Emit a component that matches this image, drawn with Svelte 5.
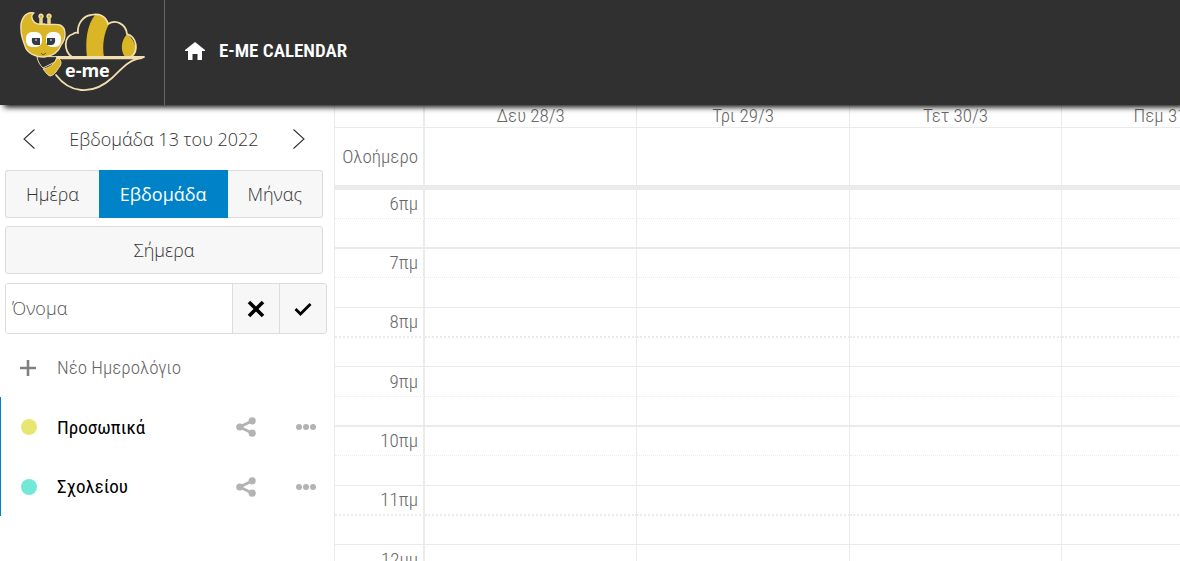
<script>
  let view = $state('week')
  let name = $state('')

  const views = [
    { id: 'day', label: 'Ημέρα' },
    { id: 'week', label: 'Εβδομάδα' },
    { id: 'month', label: 'Μήνας' },
  ]

  const calendars = [
    { name: 'Προσωπικά', color: '#e7e671' },
    { name: 'Σχολείου', color: '#74e8d6' },
  ]

  const days = ['Δευ 28/3', 'Τρι 29/3', 'Τετ 30/3', 'Πεμ 31/3', 'Παρ 1/4', 'Σαβ 2/4', 'Κυρ 3/4']

  // two half-hour slots for each hour
  const slots = ['6πμ', '7πμ', '8πμ', '9πμ', '10πμ', '11πμ', '12μμ'].flatMap((h) => [h, ''])
</script>

<div class="page">
  <header class="topbar">
    <a class="logo" href="#home" aria-label="e-me">
      <svg viewBox="0 0 164 105">
        <g stroke="#f1dfae" stroke-width="1.8" stroke-linejoin="round" stroke-linecap="round">
          <path d="M95 15C87 25 85 41 87 57H104C102 45 104 33 109 24C105 17 101 14 95 15Z" fill="#dab526" stroke="none" />
          <path d="M127 34C121 41 120 50 125 57H131C138 52 137 42 127 34Z" fill="#dab526" stroke="none" />
          <path d="M72 57C64 51 63 37 73 34Q76 32 78 33C77 24 83 16 91 15C99 13 106 16 108 24C116 19 126 24 127 34C137 37 139 51 131 57" fill="none" />
          <path d="M57 57L144 57C127 60 122 69 112 78C101 88 91 91 81 90C70 89 62 83 56 75" fill="none" />
          <path d="M56 58H141" stroke-width="2.6" />
          <path d="M37 57C38 62 40 65 43 68L55 62L57 57Z" fill="#303030" stroke-width="1" />
          <path d="M57 58C61 59 62 63 60 66C57 70 55 75 50 76C47 75 45 71 43 69C49 68 55 64 57 58Z" fill="#dab526" stroke-width="1" />
          <path d="M40 25V18A2 2 0 1 1 42 18V25M48 25V18A2 2 0 1 1 50 18V25" fill="#dab526" stroke-width="1.4" />
          <path d="M34 13C25 11 20 20 21 30C21 36 23 40 25 46C27 53 35 57 44 57C53 56 59 51 61 45C66 39 67 28 60 25C54 23 49 26 44 24C38 25 33 23 32 18Q31 15 34 13Z" fill="#dab526" stroke-width="1.4" />
        </g>
        <rect x="26" y="32" width="16" height="15" rx="6" fill="#fff" />
        <rect x="46" y="32" width="15" height="15" rx="6" fill="#fff" />
        <path d="M32 38H40V45H35Q31 44 32 38ZM47 38H55Q56 44 52 45H47Z" fill="#343b45" />
        <path d="M35 39H37V41H35ZM50 39H52V41H50Z" fill="#8b96a3" />
        <path d="M41 53L43 55L46 53" fill="none" stroke="#6c5610" />
        <text x="65" y="77">e-me</text>
      </svg>
    </a>
    <a class="title" href="#calendar">
      <svg width="20" height="18" viewBox="0 0 20 18">
        <path d="M10 0L20 8V9H17V18H12.5V12H7.5V18H3V9H0V8Z" fill="#fff" />
      </svg>
      <span>E-ME CALENDAR</span>
    </a>
  </header>

  <div class="content">
    <aside class="sidebar">
      <div class="period">
        <button aria-label="Προηγούμενη">
          <svg width="12" height="20" viewBox="0 0 12 20"><path d="M11.5 0.5L1 10L11.5 19.5" /></svg>
        </button>
        <span>Εβδομάδα 13 του 2022</span>
        <button aria-label="Επόμενη">
          <svg width="12" height="20" viewBox="0 0 12 20"><path d="M0.5 0.5L11 10L0.5 19.5" /></svg>
        </button>
      </div>

      <div class="views">
        {#each views as v}
          <button class:active={view === v.id} aria-pressed={view === v.id} onclick={() => (view = v.id)}>{v.label}</button>
        {/each}
      </div>

      <button class="today">Σήμερα</button>

      <form class="name-form" onsubmit={(e) => e.preventDefault()}>
        <input type="text" placeholder="Όνομα" aria-label="Όνομα" bind:value={name} />
        <button type="button" aria-label="Ακύρωση" onclick={() => (name = '')}>
          <svg width="18" height="18" viewBox="0 0 18 18"><path d="M2 2L16 16M16 2L2 16" stroke-width="3.6" /></svg>
        </button>
        <button type="submit" aria-label="Αποθήκευση">
          <svg width="18" height="18" viewBox="0 0 18 18"><path d="M1.5 9L6.5 14L16.5 4" stroke-width="2.8" /></svg>
        </button>
      </form>

      <button class="new-calendar">
        <svg width="16" height="16" viewBox="0 0 16 16"><path d="M8 0V16M0 8H16" stroke="#808080" stroke-width="2.6" /></svg>
        <span>Νέο Ημερολόγιο</span>
      </button>

      <ul class="calendars">
        {#each calendars as cal}
          <li>
            <span class="dot" style="background: {cal.color}"></span>
            <span class="cal-name">{cal.name}</span>
            <button aria-label="Κοινή χρήση">
              <svg width="20" height="20" viewBox="0 0 20 20">
                <path d="M16.5 3.8L3.6 10L16.5 16.2" fill="none" stroke="#b3b3b3" stroke-width="2.8" />
                <circle cx="16.2" cy="3.8" r="3.6" />
                <circle cx="3.8" cy="10" r="3.6" />
                <circle cx="16.2" cy="16.2" r="3.6" />
              </svg>
            </button>
            <button aria-label="Περισσότερα">
              <svg width="20" height="20" viewBox="0 0 20 20">
                <circle cx="3" cy="10" r="3" />
                <circle cx="10" cy="10" r="3" />
                <circle cx="17" cy="10" r="3" />
              </svg>
            </button>
          </li>
        {/each}
      </ul>
    </aside>

    <main class="calendar">
      <table>
        <thead>
          <tr class="days">
            <th class="axis"></th>
            {#each days as day}
              <th scope="col">{day}</th>
            {/each}
          </tr>
          <tr class="all-day">
            <th class="axis" scope="row">Ολοήμερο</th>
            {#each days as day}
              <td></td>
            {/each}
          </tr>
        </thead>
        <tbody>
          {#each slots as slot}
            <tr>
              <th class="axis" scope="row">{slot}</th>
              {#each days as day}
                <td></td>
              {/each}
            </tr>
          {/each}
        </tbody>
      </table>
    </main>
  </div>
</div>

<style>
  :global(body) {
    margin: 0;
    background: #fff;
  }

  .page {
    display: flex;
    flex-direction: column;
    height: 100vh;
    overflow: hidden;
    font-family: 'Open Sans', 'Noto Sans', sans-serif;
    font-size: 18px;
    font-weight: 300;
    color: #333;
  }

  button {
    padding: 0;
    border: 0;
    background: none;
    color: inherit;
    font: inherit;
    cursor: pointer;
  }

  svg {
    display: block;
    flex: none;
  }

  .topbar {
    position: relative;
    z-index: 1;
    display: flex;
    flex: none;
    height: 105px;
    background: #303030;
    box-shadow: 4px 2px 6px #000;
  }

  .logo {
    width: 164px;
    border-right: 1px solid #666;
  }

  .logo text {
    font-family: 'Open Sans', sans-serif;
    font-size: 18px;
    font-weight: 700;
    fill: #fff;
  }

  .title {
    display: flex;
    align-items: center;
    gap: 14px;
    padding: 0 20px 4px;
    color: #fff;
    font-family: 'Roboto Condensed', Roboto, sans-serif;
    font-size: 19px;
    font-weight: 600;
    text-decoration: none;
  }

  .content {
    display: flex;
    flex: 1;
    min-height: 0;
  }

  .sidebar {
    flex: none;
    box-sizing: border-box;
    width: 334px;
  }

  .period {
    display: flex;
    align-items: center;
    justify-content: space-between;
    height: 65px;
    padding: 2px 29px 0 23px;
    box-sizing: border-box;
  }

  .period path {
    fill: none;
    stroke: #333;
    stroke-width: 1.1;
  }

  .views {
    display: flex;
    height: 48px;
    margin: 0 11px 8px 5px;
  }

  .views button {
    flex: 1 1 auto;
    border: 1px solid #dcdcdc;
    background: #f7f7f7;
  }

  .views button:first-child {
    border-right: 0;
    border-radius: 3px 0 0 3px;
  }

  .views button:last-child {
    border-left: 0;
    border-radius: 0 3px 3px 0;
  }

  .views .active {
    border-color: #0082c9;
    background: #0082c9;
    color: #fff;
    font-weight: 400;
  }

  .today {
    display: block;
    width: 318px;
    height: 48px;
    margin: 0 0 9px 5px;
    border: 1px solid #dcdcdc;
    border-radius: 3px;
    background: #f7f7f7;
  }

  .name-form {
    display: flex;
    height: 51px;
    margin: 0 7px 4px 5px;
    box-sizing: border-box;
    border: 1px solid #dcdcdc;
    border-radius: 3px;
    overflow: hidden;
  }

  .name-form input {
    flex: 1;
    min-width: 0;
    padding: 0 6px 1px;
    border: 0;
    outline: 0;
    color: #333;
    font: inherit;
  }

  .name-form input::placeholder {
    color: #555;
  }

  .name-form button {
    display: grid;
    place-items: center;
    width: 47px;
    border-left: 1px solid #dcdcdc;
    background: #f7f7f7;
  }

  .name-form path {
    fill: none;
    stroke: #000;
  }

  .new-calendar,
  .calendars {
    font-family: 'Roboto Condensed', Roboto, sans-serif;
    font-size: 19px;
  }

  .new-calendar {
    display: flex;
    align-items: center;
    gap: 21px;
    width: 100%;
    height: 59px;
    padding-left: 20px;
    color: #666;
  }

  .calendars {
    margin: 0;
    padding: 0;
    border-left: 1px solid #0082c9;
    list-style: none;
    font-weight: 400;
  }

  .calendars li {
    display: flex;
    align-items: center;
    height: 60px;
    padding: 0 18px 0 20px;
    color: #000;
  }

  .calendars li + li {
    height: 59px;
  }

  .dot {
    width: 16px;
    height: 16px;
    margin-right: 20px;
    border-radius: 50%;
  }

  .cal-name {
    flex: 1;
  }

  .calendars button {
    margin-left: 40px;
  }

  .calendars circle {
    fill: #b3b3b3;
  }

  .calendar {
    flex: 1;
    min-width: 0;
    border-left: 1px solid #ebebeb;
    overflow: hidden;
  }

  table {
    width: 100%;
    min-width: 1577px;
    table-layout: fixed;
    border-collapse: separate;
    border-spacing: 0;
    color: #666;
    font-family: 'Roboto Condensed', Roboto, sans-serif;
    font-size: 19px;
  }

  th,
  td {
    box-sizing: border-box;
    padding: 0;
    border-right: 1px solid #ebebeb;
    border-bottom: 1px solid #ebebeb;
    font-weight: 300;
    line-height: 28px;
  }

  .axis {
    width: 90px;
    padding-right: 5px;
    border-right-width: 2px;
    text-align: right;
  }

  .days th {
    height: 23px;
    line-height: 22px;
  }

  .all-day th,
  .all-day td {
    height: 62px;
    border-bottom-width: 5px;
  }

  tbody th,
  tbody td {
    height: 30px;
  }

  tbody tr:nth-child(odd) > * {
    border-bottom-style: dotted;
  }

  tbody tr:nth-child(3n + 2) > * {
    border-bottom-width: 2px;
  }

  tbody tr:first-child > *,
  tbody tr:nth-child(3n) > * {
    height: 29px;
  }
</style>
